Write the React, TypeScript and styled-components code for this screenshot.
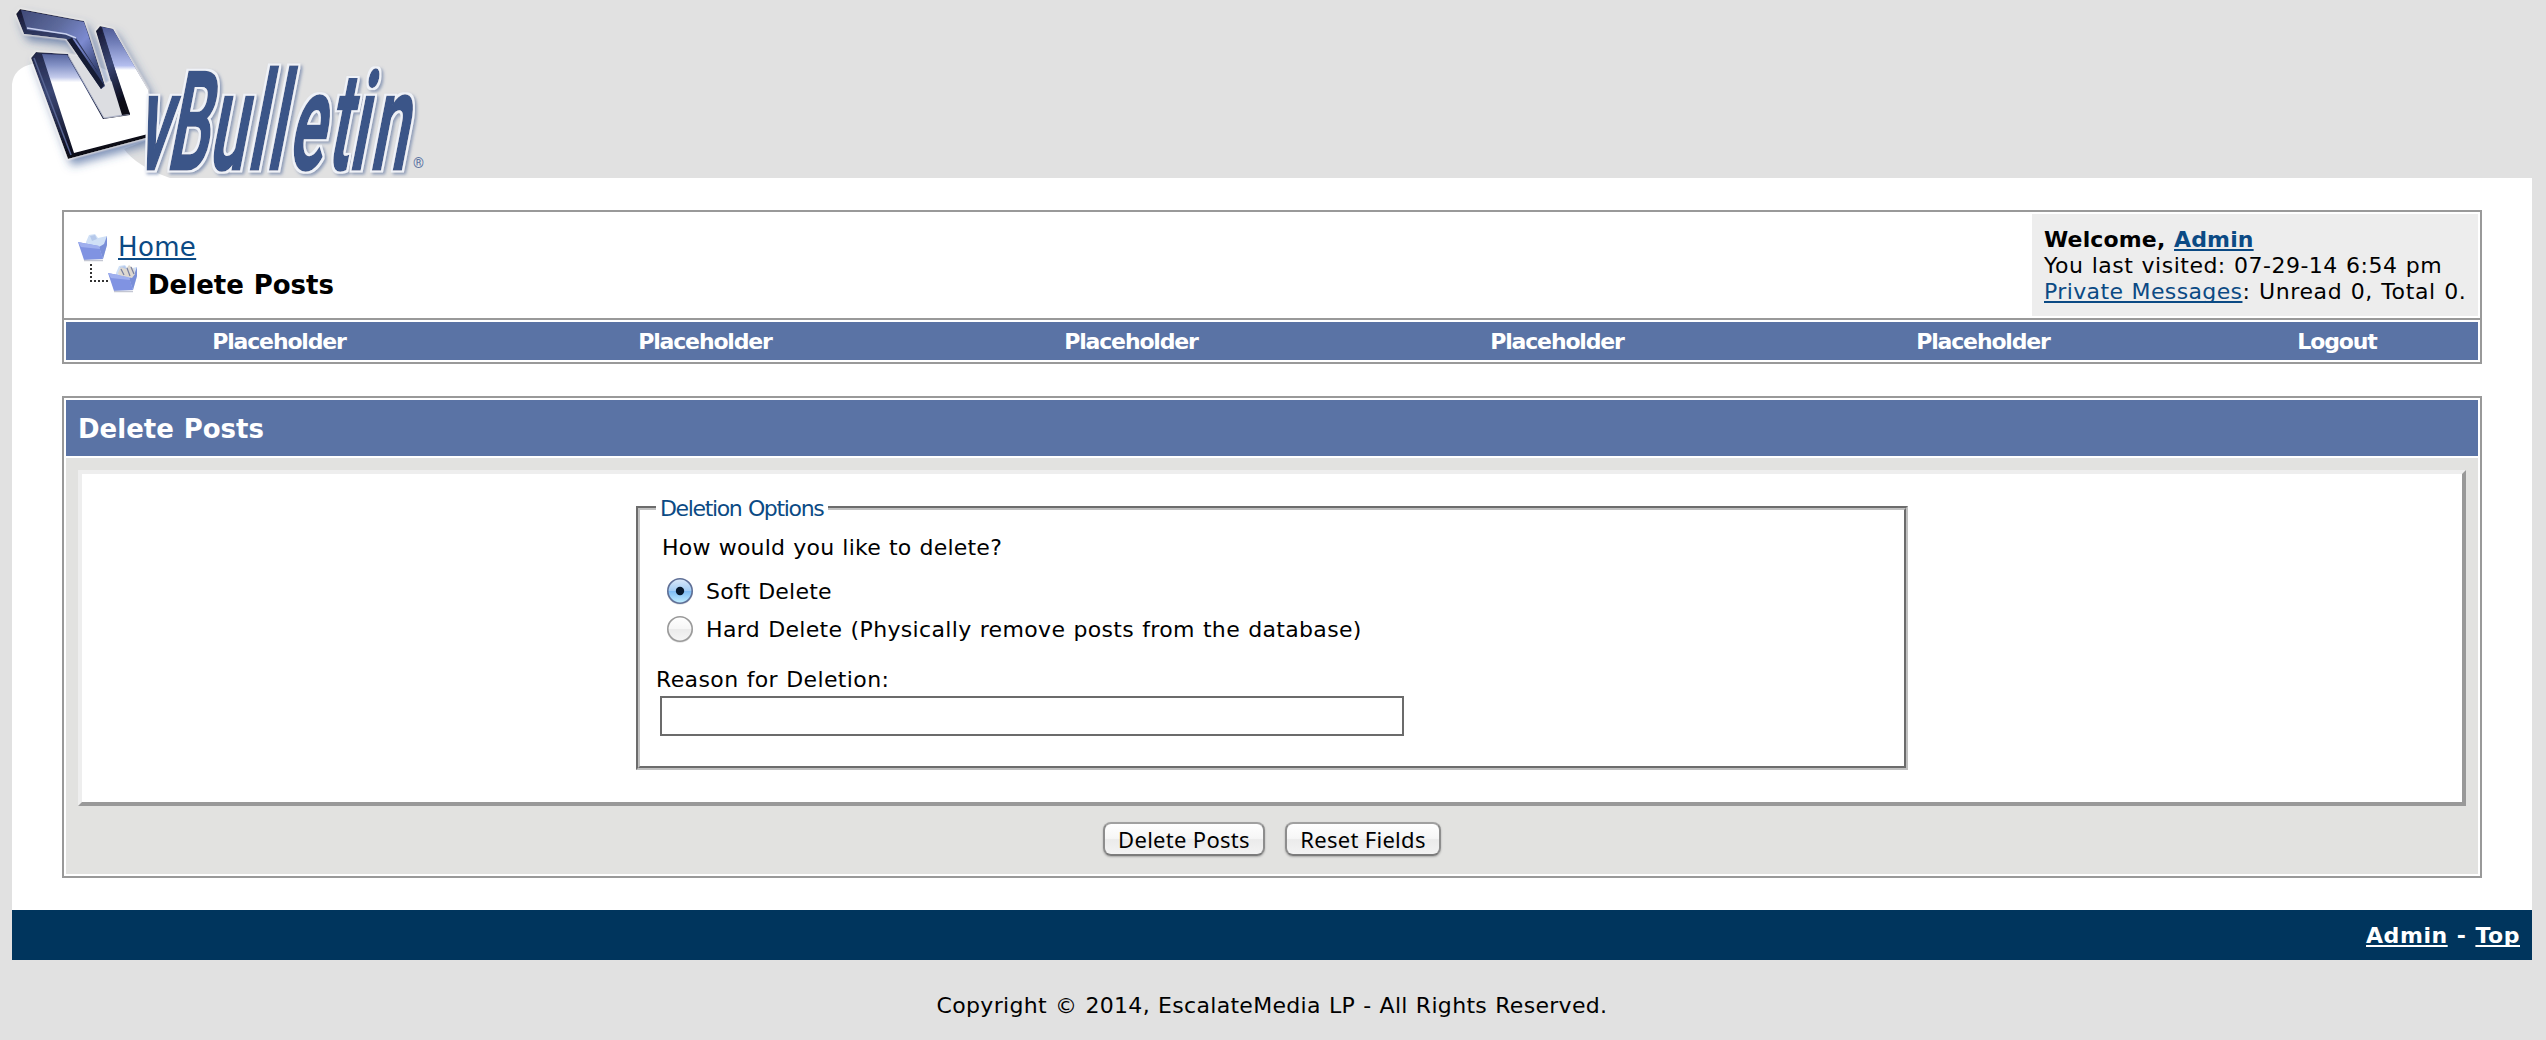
import React from "react";
import styled, { createGlobalStyle } from "styled-components";

const Global = createGlobalStyle`
  * { box-sizing: border-box; }
  body {
    margin: 0;
    background: #e1e1e1;
    color: #000;
    font-family: Verdana, "DejaVu Sans", sans-serif;
    font-size: 22px;
    line-height: 26px;
    word-spacing: 0.8px;
  }
`;

const Page = styled.div`
  width: 2520px;
  height: 1040px;
  margin: 0 14px 0 12px;
  display: flex;
  flex-direction: column;
`;
const Header = styled.header`
  height: 178px;
  flex: none;
`;
const LogoArt = styled.svg`
  display: block;
  overflow: visible;
`;
const Main = styled.main`
  height: 732px;
  padding: 32px 50px;
  background: #fff;
  display: flex;
  flex-direction: column;
  gap: 32px;
`;
const Box = styled.section`
  border: 2px solid #999;
  background: #fff;
`;
const TopRow = styled.div`
  height: 106px;
  padding: 2px;
  display: flex;
  justify-content: space-between;
`;
const Crumbs = styled.nav`
  padding: 17px 0 0 12px;
`;
const Crumb = styled.div<{ $indent?: boolean }>`
  display: flex;
  align-items: flex-start;
  height: ${(p) => (p.$indent ? 40 : 34)}px;
  gap: 10px;
  padding-left: ${(p) => (p.$indent ? 11 : 0)}px;
  font-size: 26px;
  line-height: 32px;
`;
const CrumbIcon = styled.svg`
  display: block;
  overflow: visible;
`;
const CrumbText = styled.strong`
  padding-top: 4px;
  letter-spacing: 0;
`;
const Link = styled.a<{ $light?: boolean; $track?: number }>`
  color: ${(p) => (p.$light ? "#fff" : "#0b4a84")};
  text-decoration: underline;
  text-decoration-thickness: 2px;
  text-underline-offset: 2px;
  text-decoration-skip-ink: none;
  letter-spacing: ${(p) => (p.$track === undefined ? "inherit" : `${p.$track}px`)};
`;
const Welcome = styled.div`
  width: 446px;
  height: 102px;
  padding: 13px 0 0 12px;
  background: #ededed;
  white-space: nowrap;
`;
const Line = styled.div<{ $track: number }>`
  height: 26px;
  letter-spacing: ${(p) => p.$track}px;
`;
const NavBar = styled.nav`
  border-top: 2px solid #999;
  padding: 2px;
`;
const NavRow = styled.div`
  height: 38px;
  display: flex;
  background: #5a73a5;
`;
const NavItem = styled.a`
  flex: 0 0 426px;
  color: #fff;
  font-weight: bold;
  text-align: center;
  line-height: 40px;
  letter-spacing: -1.15px;
  &:last-child {
    flex: 1;
  }
`;
const Panel = styled(Box)`
  height: 482px;
  padding: 2px;
  display: flex;
  flex-direction: column;
  gap: 2px;
`;
const PanelTitle = styled.h1`
  margin: 0;
  height: 56px;
  padding-left: 12px;
  background: #5a73a5;
  color: #fff;
  font-size: 26px;
  line-height: 58px;
  letter-spacing: 0;
`;
const PanelBody = styled.form`
  height: 416px;
  padding: 12px;
  background: #e2e2e0;
`;
const Bevel = styled.div`
  height: 336px;
  border: 4px solid;
  border-color: #eeeeee #999 #999 #eeeeee;
  background: #fff;
  padding-top: 20px;
`;
const Options = styled.fieldset`
  display: block;
  width: 1272px;
  height: 276px;
  margin: 0 0 0 554px;
  padding: 13px 0 0 16px;
  border: 4px groove #c0c0c0;
`;
const Legend = styled.legend`
  padding: 0 5px 0 4px;
  margin: 0;
  color: #0b4a84;
  letter-spacing: -1.35px;
  height: 28px;
  line-height: 29px;
`;
const Question = styled.div`
  padding-left: 6px;
  height: 38px;
  letter-spacing: 0.22px;
`;
const Choice = styled.label<{ $track: number }>`
  display: flex;
  align-items: flex-start;
  height: 38px;
  gap: 12px;
  padding-left: 10px;
  line-height: 38px;
  letter-spacing: ${(p) => p.$track}px;
`;
const Radio = styled.svg`
  display: block;
  margin-top: 4px;
`;
const ReasonLabel = styled.div`
  margin-top: 18px;
  height: 29px;
  letter-spacing: 0.38px;
`;
const Reason = styled.input`
  display: block;
  width: 744px;
  height: 40px;
  margin: 0 0 0 4px;
  border: 2px solid #6b6b6b;
  background: #fff;
`;
const Buttons = styled.div`
  display: flex;
  justify-content: center;
  gap: 20px;
  padding-top: 16px;
`;
const Button = styled.button<{ $w: number }>`
  width: ${(p) => p.$w}px;
  height: 34px;
  padding: 0;
  border: 2px solid #8d8d8d;
  border-color: #a0a0a0 #8d8d8d #7c7c7c;
  border-radius: 8px;
  background: linear-gradient(#fff 0, #f6f6f6 48%, #ebebeb 52%, #f3f3f3 100%);
  box-shadow: 0 1px 2px rgba(0, 0, 0, 0.25);
  color: #000;
  font-family: "Lucida Grande", "Noto Sans", sans-serif;
  font-size: 22px;
  line-height: 30px;
  letter-spacing: 0.3px;
`;
const FooterBar = styled.footer`
  height: 50px;
  flex: none;
  padding-right: 12px;
  background: #00355d;
  color: #fff;
  font-weight: bold;
  text-align: right;
  line-height: 52px;
  letter-spacing: 0.55px;
`;
const Copyright = styled.div`
  padding-top: 33px;
  text-align: center;
  letter-spacing: 0.31px;
`;

const Logo = () => (
  <LogoArt width="450" height="178" viewBox="12 0 450 178" aria-label="vBulletin">
    <defs>
      <linearGradient id="chrome" gradientUnits="userSpaceOnUse" x1="0" y1="50" x2="0" y2="84">
        <stop offset="0" stopColor="#46548f" />
        <stop offset="0.45" stopColor="#8492c6" />
        <stop offset="0.8" stopColor="#c3caeb" />
        <stop offset="0.95" stopColor="#fff" />
      </linearGradient>
      <linearGradient id="bar" gradientUnits="userSpaceOnUse" x1="0" y1="26" x2="0" y2="70">
        <stop offset="0" stopColor="#4c5893" />
        <stop offset="0.4" stopColor="#7380ba" />
        <stop offset="0.9" stopColor="#b4beee" />
        <stop offset="1" stopColor="#fff" />
      </linearGradient>
      <linearGradient id="hook" gradientUnits="userSpaceOnUse" x1="20" y1="10" x2="92" y2="75">
        <stop offset="0" stopColor="#3f4977" />
        <stop offset="0.4" stopColor="#5d6a9c" />
        <stop offset="0.7" stopColor="#7c8ad0" />
        <stop offset="1" stopColor="#33406f" />
      </linearGradient>
      <linearGradient id="steel" x1="0" y1="0" x2="0.3" y2="1">
        <stop offset="0" stopColor="#14142e" />
        <stop offset="0.5" stopColor="#3a4674" />
        <stop offset="1" stopColor="#090916" />
      </linearGradient>
      <filter id="soft" x="-20%" y="-20%" width="150%" height="150%">
        <feDropShadow dx="0" dy="0" stdDeviation="1" floodColor="#fff" floodOpacity="1" />
        <feDropShadow dx="4" dy="6" stdDeviation="5" floodColor="#35558f" floodOpacity="0.65" />
      </filter>
      <filter id="wordShade" x="-10%" y="-10%" width="130%" height="130%">
        <feMorphology in="SourceAlpha" operator="dilate" radius="1.6" result="fat" />
        <feGaussianBlur in="fat" stdDeviation="0.7" result="fatSoft" />
        <feFlood floodColor="#eff2f8" />
        <feComposite in2="fatSoft" operator="in" result="halo" />
        <feMerge result="word">
          <feMergeNode in="halo" />
          <feMergeNode in="SourceGraphic" />
        </feMerge>
        <feDropShadow in="word" dx="2" dy="2" stdDeviation="1.8" floodColor="#4c6596" floodOpacity="0.55" />
      </filter>
    </defs>
    <path d="M12 178V84Q14 68 32 64L80 58L145 88Q160 105 163 121L158 136L124 149Q136 166 170 178Z" fill="#fff" />
    <g filter="url(#soft)">
      <path d="M20 9L84 21L89 35L105 86L101 89L69 42L66 39L24 34L16 14Z" fill="url(#steel)" />
      <path d="M21 10L84 22L103 80L76 38L66 34L27 30Z" fill="url(#hook)" />
      <path d="M27 28L66 34L76 38" fill="none" stroke="#c9d1ef" strokeWidth="1.4" />
      <path d="M36 52L68 54L104 118L121 116L96 31L100 26L113 29L148 90L146 138L68 159L31 58Z" fill="url(#steel)" />
      <path d="M42 54L67 55L103 119L130 115L103 30L113 30L148 90V134L74 153Z" fill="url(#chrome)" />
      <path d="M102 27L113 29L148 90L128 112Z" fill="url(#bar)" />
      <path d="M68 55L104 118L129 114L118 78L102 86L84 56Z" fill="#dcdde1" />
      <path d="M68 55L104 118L129 114" fill="none" stroke="#a9afc4" strokeWidth="1" />
      <path d="M85 34L105 86L101 89L69 42L74 38L98 72Z" fill="url(#hook)" />
      <path d="M67 40L72 38L104 85L101 89Z" fill="#151a35" />
      <path d="M96 31L101 27L130 114L122 115Z" fill="url(#steel)" />
      <path d="M34 58L71 155" fill="none" stroke="#566391" strokeWidth="1.5" />
    </g>
    <g filter="url(#wordShade)">
      <text
        transform="translate(143 169) skewX(-11) scale(0.48 1)"
        x="-17 47 134 215 255 300 381 427 471"
        y="0"
        wordSpacing="0"
        fontFamily="Roboto, sans-serif"
        fontWeight="500"
        fontSize="136"
        fill="#3b5588"
        stroke="#3b5588"
        strokeWidth="3"
      >
        vBulletin
      </text>
    </g>
    <text x="413" y="168" fontFamily="Roboto, sans-serif" fontSize="14" fill="#5c75a3">
      ®
    </text>
  </LogoArt>
);

const Folder = () => (
  <g>
    <path d="M8 9L11 2L17 1L20 5L29 3L29 12L25 26L8 24Z" fill="#d0e0f6" />
    <path d="M12 3L17 2L19 6L14 8Z" fill="#b5c8ea" />
    <path d="M29 3V12L25 26L21 14L26 11Z" fill="#7a8fd8" />
    <path d="M0 9L5 10L21 13L25 26L6 27Z" fill="#8093e2" />
    <path d="M0 9L5 10L21 13L22 16L3 14Z" fill="#9fafee" />
    <path d="M6 27.5H25" stroke="#c3c6d2" strokeWidth="1.5" />
  </g>
);

const RadioDot = ({ checked }: { checked?: boolean }) => (
  <Radio width="28" height="28" viewBox="0 0 28 28">
    <defs>
      <linearGradient id={checked ? "on" : "off"} x1="0" y1="0" x2="0" y2="1">
        <stop offset="0" stopColor={checked ? "#dceafa" : "#ffffff"} />
        <stop offset="0.48" stopColor={checked ? "#a3cdf5" : "#f6f6f6"} />
        <stop offset="0.52" stopColor={checked ? "#7fbcf3" : "#ebebeb"} />
        <stop offset="1" stopColor={checked ? "#c3efff" : "#f6f6f6"} />
      </linearGradient>
    </defs>
    <circle cx="14" cy="14.8" r="13" fill="#000" opacity="0.12" />
    <circle
      cx="14"
      cy="14"
      r="12.2"
      fill={`url(#${checked ? "on" : "off"})`}
      stroke={checked ? "#5f6f96" : "#9a9a9a"}
      strokeWidth="1.6"
    />
    {checked && <circle cx="14" cy="14" r="4.2" fill="#06182c" />}
  </Radio>
);

const tabs = ["Placeholder", "Placeholder", "Placeholder", "Placeholder", "Placeholder", "Logout"];

export default function App() {
  return (
    <>
      <Global />
      <Page>
        <Header>
          <Logo />
        </Header>
        <Main>
          <Box>
            <TopRow>
              <Crumbs>
                <Crumb>
                  <CrumbIcon width="30" height="34" viewBox="0 -2 30 34">
                    <Folder />
                  </CrumbIcon>
                  <Link $track={0.35}>Home</Link>
                </Crumb>
                <Crumb $indent>
                  <CrumbIcon width="49" height="34" viewBox="0 0 49 34">
                    <path d="M2 -1V16H19" fill="none" stroke="#333" strokeWidth="2" strokeDasharray="2 2" />
                    <g transform="translate(19 -1)">
                      <Folder />
                      <path d="M10 9L13 3L18 5L21 1L26 5L27 10L24 14L20 13L11 11Z" fill="#ddd8d0" />
                      <path d="M13 5L16 11M19 4L22 12M23 3L26 10" stroke="#777fa0" strokeWidth="1.2" />
                    </g>
                  </CrumbIcon>
                  <CrumbText>Delete Posts</CrumbText>
                </Crumb>
              </Crumbs>
              <Welcome>
                <Line $track={0.14}>
                  <strong>
                    Welcome, <Link>Admin</Link>
                  </strong>
                </Line>
                <Line $track={0.49}>You last visited: 07-29-14 6:54 pm</Line>
                <Line $track={0.62}>
                  <Link $track={0.38}>Private Messages</Link>: Unread 0, Total 0.
                </Line>
              </Welcome>
            </TopRow>
            <NavBar>
              <NavRow>
                {tabs.map((t, i) => (
                  <NavItem key={i}>{t}</NavItem>
                ))}
              </NavRow>
            </NavBar>
          </Box>
          <Panel>
            <PanelTitle>Delete Posts</PanelTitle>
            <PanelBody>
              <Bevel>
                <Options>
                  <Legend>Deletion Options</Legend>
                  <Question>How would you like to delete?</Question>
                  <Choice $track={0.2}>
                    <RadioDot checked />
                    Soft Delete
                  </Choice>
                  <Choice $track={0.34}>
                    <RadioDot />
                    Hard Delete (Physically remove posts from the database)
                  </Choice>
                  <ReasonLabel>Reason for Deletion:</ReasonLabel>
                  <Reason />
                </Options>
              </Bevel>
              <Buttons>
                <Button $w={162} type="button">Delete Posts</Button>
                <Button $w={156} type="button">Reset Fields</Button>
              </Buttons>
            </PanelBody>
          </Panel>
        </Main>
        <FooterBar>
          <Link $light>Admin</Link> - <Link $light>Top</Link>
        </FooterBar>
        <Copyright>Copyright © 2014, EscalateMedia LP - All Rights Reserved.</Copyright>
      </Page>
    </>
  );
}
